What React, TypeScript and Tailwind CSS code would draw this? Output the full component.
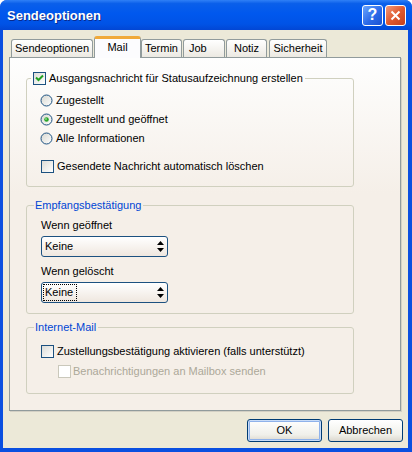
import React from "react";

function Check({ checked, disabled }: { checked?: boolean; disabled?: boolean }) {
  return (
    <span
      className={`flex h-[13px] w-[13px] shrink-0 items-center justify-center border ${
        disabled ? "border-[#cac8bb] bg-white" : "border-[#1c5180] bg-[linear-gradient(135deg,#dcdcd7,#ffffff)]"
      }`}
    >
      {checked && (
        <svg width="9" height="9" viewBox="0 0 9 9">
          <path d="M1 3.5 L3.5 6 L8 1.5" fill="none" stroke="#21a121" strokeWidth="2" />
        </svg>
      )}
    </span>
  );
}

function Radio({ checked }: { checked?: boolean }) {
  return (
    <svg width="13" height="13" viewBox="0 0 13 13" className="shrink-0">
      <defs>
        <linearGradient id="rg" x1="0" y1="0" x2="1" y2="1">
          <stop offset="0" stopColor="#d6d6cf" />
          <stop offset="1" stopColor="#ffffff" />
        </linearGradient>
      </defs>
      <circle cx="6.5" cy="6.5" r="5.5" fill="url(#rg)" stroke="#1c5180" />
      {checked && <circle cx="6.5" cy="6.5" r="2.3" fill="#2aa52a" />}
      {checked && <circle cx="6" cy="6" r="0.9" fill="#8ee08e" />}
    </svg>
  );
}

function Select({ focus }: { focus?: boolean }) {
  return (
    <div className="flex h-[21px] w-[127px] items-center justify-between rounded-[3px] border border-[#1c5180] bg-[linear-gradient(to_bottom,#ffffff,#efe7df)] pl-[1px] pr-[3px]">
      <span
        className={`flex h-[17px] w-[34px] items-center border pl-[1px] ${
          focus ? "border-dotted border-black" : "border-transparent"
        }`}
      >
        Keine
      </span>
      <svg width="7" height="11" viewBox="0 0 7 11">
        <path d="M3.5 0 L7 4 H0 Z M0 7 H7 L3.5 11 Z" fill="#000" />
      </svg>
    </div>
  );
}

// widths/margins taken from the tab strip of the dialog
const TABS = [
  { label: "Sendeoptionen", cls: "w-[82px] justify-center" },
  { label: "Mail", cls: "w-[47px] ml-px", active: true },
  { label: "Termin", cls: "w-[41px] justify-center" },
  { label: "Job", cls: "w-[42px] ml-px pl-[5px]" },
  { label: "Notiz", cls: "w-[41px] ml-px justify-center" },
  { label: "Sicherheit", cls: "w-[58px] ml-[2px] justify-center" },
];

export default function App() {
  return (
    <div className="flex h-[452px] w-[412px] flex-col overflow-hidden rounded-t-[7px] bg-[#0a4fe0] font-['Liberation_Sans',Arial,sans-serif] text-[11px] leading-[13px] text-black">
      {/* title bar */}
      <div className="flex h-[30px] shrink-0 items-center justify-between bg-[linear-gradient(to_bottom,#2f80f6_0%,#0a5fea_12%,#0058ee_45%,#0053e6_80%,#0246d4_100%)] pl-[7px] pr-[6px]">
        <span className="text-[13px] font-bold text-white [text-shadow:1px_1px_#0a2a8a]">Sendeoptionen</span>
        <div className="flex gap-[2px]">
          <div className="flex h-[21px] w-[21px] items-center justify-center rounded-[3px] border border-white bg-[linear-gradient(135deg,#6aa6ff,#2c6ae8_55%,#1a52d2)]">
            <span className="text-[16px] font-bold leading-none text-white">?</span>
          </div>
          <div className="flex h-[21px] w-[21px] items-center justify-center rounded-[3px] border border-white bg-[linear-gradient(135deg,#f29a7a,#e05a30_50%,#c5401c)]">
            <svg width="11" height="11" viewBox="0 0 11 11">
              <path d="M1.5 1.5 L9.5 9.5 M9.5 1.5 L1.5 9.5" stroke="#fff" strokeWidth="2" />
            </svg>
          </div>
        </div>
      </div>

      {/* body */}
      <div className="mb-[4px] ml-[3px] mr-[4px] flex flex-1 flex-col bg-[#ece9d8]">
        <div className="flex h-[27px] items-end pl-[8px]">
          {TABS.map((t) =>
            t.active ? (
              <div
                key={t.label}
                className={`relative z-10 -mb-px flex h-[22px] ${t.cls} justify-center rounded-t-[3px] border-x border-t-[3px] border-x-[#919b9c] border-t-[#f0a93a] bg-[#fcfcfe] pt-[2px]`}
              >
                {t.label}
              </div>
            ) : (
              <div
                key={t.label}
                className={`flex h-[18px] ${t.cls} items-center rounded-t-[3px] border-x border-t border-[#919b9c] bg-[linear-gradient(to_bottom,#ffffff,#ece9e2)]`}
              >
                {t.label}
              </div>
            ),
          )}
        </div>

        {/* tab panel */}
        <div className="ml-[6px] h-[354px] w-[392px] border border-[#919b9c] bg-[linear-gradient(to_bottom,#fefefe_0px,#f5efe8_135px,#f5efe8_100%)] pl-[16px] shadow-[1px_1px_0_#d3d0c4]">
          <fieldset className="mt-[14px] w-[328px] rounded-[3px] border border-[#d0d0bf] p-0">
            <legend className="ml-[4px] px-[2px]">
              <span className="flex items-center gap-[3px]">
                <Check checked />
                Ausgangsnachricht für Statusaufzeichnung erstellen
              </span>
            </legend>
            <div className="flex flex-col pb-[10px] pl-[13px] pt-[6px]">
              {[
                ["Zugestellt", false],
                ["Zugestellt und geöffnet", true],
                ["Alle Informationen", false],
              ].map(([l, c]) => (
                <div key={l as string} className="flex h-[19px] items-center gap-[3px]">
                  <Radio checked={c as boolean} />
                  {l}
                </div>
              ))}
              <div className="mt-[9px] flex h-[19px] items-center gap-[3px] pl-px">
                <Check />
                Gesendete Nachricht automatisch löschen
              </div>
            </div>
          </fieldset>

          <fieldset className="mt-[12px] w-[328px] rounded-[3px] border border-[#d0d0bf] p-0">
            <legend className="ml-[7px] px-[1px] pr-[2px] text-[#0046d5]">Empfangsbestätigung</legend>
            <div className="flex flex-col pb-[10px] pl-[14px] pt-[7px]">
              <span>Wenn geöffnet</span>
              <div className="mt-[4px]">
                <Select />
              </div>
              <span className="mt-[8px]">Wenn gelöscht</span>
              <div className="mt-[4px]">
                <Select focus />
              </div>
            </div>
          </fieldset>

          <fieldset className="mt-[7px] w-[328px] rounded-[3px] border border-[#d0d0bf] p-0">
            <legend className="ml-[7px] px-[1px] pr-[2px] text-[#0046d5]">Internet-Mail</legend>
            <div className="flex flex-col pb-[15px] pl-[14px] pt-[11px]">
              <div className="flex h-[13px] items-center gap-[3px]">
                <Check />
                Zustellungsbestätigung aktivieren (falls unterstützt)
              </div>
              <div className="mt-[7px] flex h-[13px] items-center gap-[2px] pl-[17px] text-[#aca899]">
                <Check disabled />
                Benachrichtigungen an Mailbox senden
              </div>
            </div>
          </fieldset>
        </div>

        {/* buttons */}
        <div className="mt-[8px] flex justify-end gap-[6px] pr-[5px]">
          <button className="h-[23px] w-[75px] rounded-[3px] border border-[#003c74] bg-[linear-gradient(to_bottom,#ffffff,#f0f0ea_70%,#dcd8ce)] shadow-[inset_0_0_0_1px_#c8dcf8,inset_0_0_0_2px_#8fb2ea]">
            OK
          </button>
          <button className="h-[23px] w-[75px] rounded-[3px] border border-[#003c74] bg-[linear-gradient(to_bottom,#ffffff,#f0f0ea_70%,#dcd8ce)]">
            Abbrechen
          </button>
        </div>
      </div>
    </div>
  );
}
